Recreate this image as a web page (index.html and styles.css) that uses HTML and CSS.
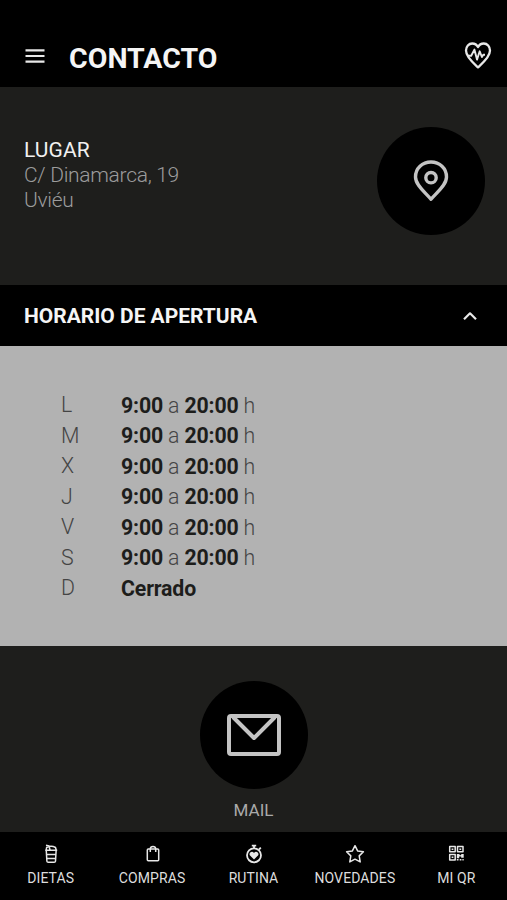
FILE: index.html
```html
<!DOCTYPE html>
<html lang="es">
<head>
<meta charset="utf-8">
<title>Contacto</title>
<link rel="stylesheet" href="styles.css">
</head>
<body>
<div class="app">
  <header class="topbar">
    <svg class="menu" viewBox="0 0 20 16"><path d="M.5 2.400h19M.5 8h19M.5 13.600h19"/></svg>
    <h1 class="title">CONTACTO</h1>
    <svg class="health" viewBox="0 0 28 28"><path d="M14 26.300C10.500 23 2 16.500 2 9.600C2 5.300 4.800 2.500 8.200 2.500C11 2.500 13 4 14 6.100C15 4 17 2.500 19.800 2.500C23.200 2.500 26 5.300 26 9.600C26 16.500 17.500 23 14 26.300Z"/><path class="pulse" d="M3.500 14.800H7.200L10.400 8.600L13 18.600L15.700 10.300L17.900 16L19.300 13.800H21"/></svg>
  </header>
  <main>
    <section class="place">
      <div class="address">
        <h2 class="place-title">LUGAR</h2>
        <p class="street">C/ Dinamarca, 19</p>
        <p class="city">Uviéu</p>
      </div>
      <div class="round">
        <svg class="pin" viewBox="0 0 36 42"><path d="M18 39.300C13 33 2.500 25.500 2.500 17C2.500 8.300 9.300 2 18 2S33.500 8.300 33.500 17C33.500 25.500 23 33 18 39.300Z"/><circle cx="18" cy="17.700" r="5.200"/></svg>
      </div>
    </section>
    <section>
      <div class="accordion">
        <h2 class="accordion-title">HORARIO DE APERTURA</h2>
        <svg class="chevron" viewBox="0 0 14 9"><path d="M1 7.200L7 1.300L13 7.200"/></svg>
      </div>
      <dl class="hours">
        <dt>L</dt><dd><b>9:00</b> a <b>20:00</b> h</dd>
        <dt>M</dt><dd><b>9:00</b> a <b>20:00</b> h</dd>
        <dt>X</dt><dd><b>9:00</b> a <b>20:00</b> h</dd>
        <dt>J</dt><dd><b>9:00</b> a <b>20:00</b> h</dd>
        <dt>V</dt><dd><b>9:00</b> a <b>20:00</b> h</dd>
        <dt>S</dt><dd><b>9:00</b> a <b>20:00</b> h</dd>
        <dt>D</dt><dd><b>Cerrado</b></dd>
      </dl>
    </section>
    <section class="mail">
      <div class="round">
        <svg class="envelope" viewBox="0 0 54 42"><rect x="2" y="2" width="50" height="38" rx="2"/><path d="M6 3L27 24L48 3"/></svg>
      </div>
      <p class="mail-label">MAIL</p>
    </section>
  </main>
  <nav class="tabs">
    <a class="tab"><svg viewBox="0 0 20 20"><path d="M4.200 6.300H16.200M5.200 6L5.600 3.500Q10 1 14.500 3.500L15.200 6M5.300 7L5.900 17.200Q6 18.300 7.300 18.300H13.100Q14.400 18.300 14.500 17.200L15.100 7M6 10.500H14.700M6.200 14.500H14.500M9 6L8 2L5 1.300"/></svg><span>DIETAS</span></a>
    <a class="tab"><svg viewBox="0 0 20 20"><rect x="4.300" y="5" width="11.400" height="11.700" rx="1"/><path d="M7.300 8V4.700Q7.500 2.500 10 2.500T12.700 4.700V8"/></svg><span>COMPRAS</span></a>
    <a class="tab"><svg viewBox="0 0 20 20"><circle class="dial" cx="10" cy="11.300" r="7"/><path class="dial" d="M7.800 1.700H12.200M10 1.700V4M15 5.500L16.800 3.700"/><path class="solid" d="M10 15.500L5.800 11.300C4.500 9 8 6.300 10 9C12 6.300 15.500 9 14.200 11.300Z"/></svg><span>RUTINA</span></a>
    <a class="tab"><svg viewBox="0 0 20 20"><path d="M10 1.700L12.600 6.900L18.400 7.800L14.200 11.900L15.200 17.900L10 15.200L4.800 17.900L5.800 11.900L1.600 7.800L7.400 6.900Z"/></svg><span>NOVEDADES</span></a>
    <a class="tab"><svg viewBox="0 0 20 20"><g transform="translate(-.8 0)"><rect x="3.500" y="2.500" width="5.500" height="5.300"/><rect x="11.300" y="2.500" width="5.500" height="5.300"/><rect x="3.500" y="10.600" width="5.500" height="5.300"/><path class="solid" d="M5.400 4.400H7.200V6H5.400ZM13.200 4.400H15V6H13.200ZM5.400 12.500H7.200V14.100H5.400ZM10.600 10H13L14 11.500L15.500 10H17.500V13.700H15V12.500H13V14.300H10.600ZM10.600 15H12.300V16.600H10.600ZM13.500 15H15.200V16.600H13.500ZM16.200 15H17.500V16.600H16.200Z"/></g></svg><span>MI QR</span></a>
  </nav>
</div>
</body>
</html>
```
FILE: styles.css
```css
* { box-sizing: border-box; }
body { margin: 0; background: #000; font-family: Roboto, "Liberation Sans", sans-serif; }
h1, h2, p, dl, dd { margin: 0; }
svg { display: block; fill: none; stroke: #e8e8e8; stroke-linejoin: round; }
.app { width: 507px; height: 900px; display: flex; flex-direction: column; background: #000; overflow: hidden; }
.topbar { height: 86.5px; flex: none; display: flex; align-items: center; padding: 29.5px 15px 0 25px; }
.menu { width: 20px; height: 16px; margin-top: -4px; stroke-width: 2.1; }
.title { flex: 1; margin-left: 24px; padding-top: 1px; font-size: 28.5px; line-height: 34px; font-weight: 700; letter-spacing: .04px; color: #f5f5f5; }
.health { width: 28px; height: 28px; margin-top: -6px; stroke-width: 2.3; }
.pulse { stroke-width: 1.9; }
.place { height: 198.5px; padding: 40.5px 22.5px 0 24px; display: flex; justify-content: space-between; background: #1e1e1c; }
.address { padding-top: 10px; font-size: 21px; line-height: 25px; font-weight: 300; letter-spacing: -.3px; color: #9c9c9c; }
.place-title { font-size: 21px; font-weight: 400; letter-spacing: .1px; color: #f0f0f0; line-height: 26px; }
.round { width: 108px; height: 108px; border-radius: 50%; background: #000; display: grid; place-items: center; }
.round svg { stroke: #c4c4c4; }
.pin { width: 36px; height: 42px; stroke-width: 3.4; }
.accordion { height: 61px; padding: 1px 30px 0 24px; display: flex; align-items: center; justify-content: space-between; }
.accordion-title { font-size: 21px; font-weight: 700; letter-spacing: -.02px; color: #f5f5f5; }
.chevron { width: 14px; height: 9px; stroke-width: 2.2; }
.hours { height: 299.5px; padding: 43.5px 0 0 61px; display: grid; grid-template-columns: 60px 1fr; grid-auto-rows: 30.5px; align-content: start; background: #b2b2b2; color: #444; font-size: 21.3px; line-height: 31px; font-weight: 300; letter-spacing: -.15px; }
.hours dt { margin-top: -.5px; }
.hours b { font-weight: 700; color: #1d1d1b; }
.mail { height: 186px; padding-top: 36px; background: #1e1e1c; display: flex; flex-direction: column; align-items: center; }
.mail .round { margin-top: -.5px; }
.envelope { width: 54px; height: 42px; stroke-width: 4; }
.mail-label { margin-top: 10.5px; font-size: 17px; line-height: 20px; color: #aaa; }
.tabs { flex: 1; display: grid; grid-template-columns: repeat(5, 1fr); }
.tab { display: flex; flex-direction: column; align-items: center; padding-top: 12px; font-size: 14px; line-height: 18px; letter-spacing: .1px; color: #ddd; white-space: nowrap; }
.tab svg { width: 20px; height: 20px; margin: 0 0 5.500px 1px; stroke-width: 1.5; }
.tab .dial { stroke-width: 1.8; }
.tab .solid { fill: #e8e8e8; stroke: none; }
```
